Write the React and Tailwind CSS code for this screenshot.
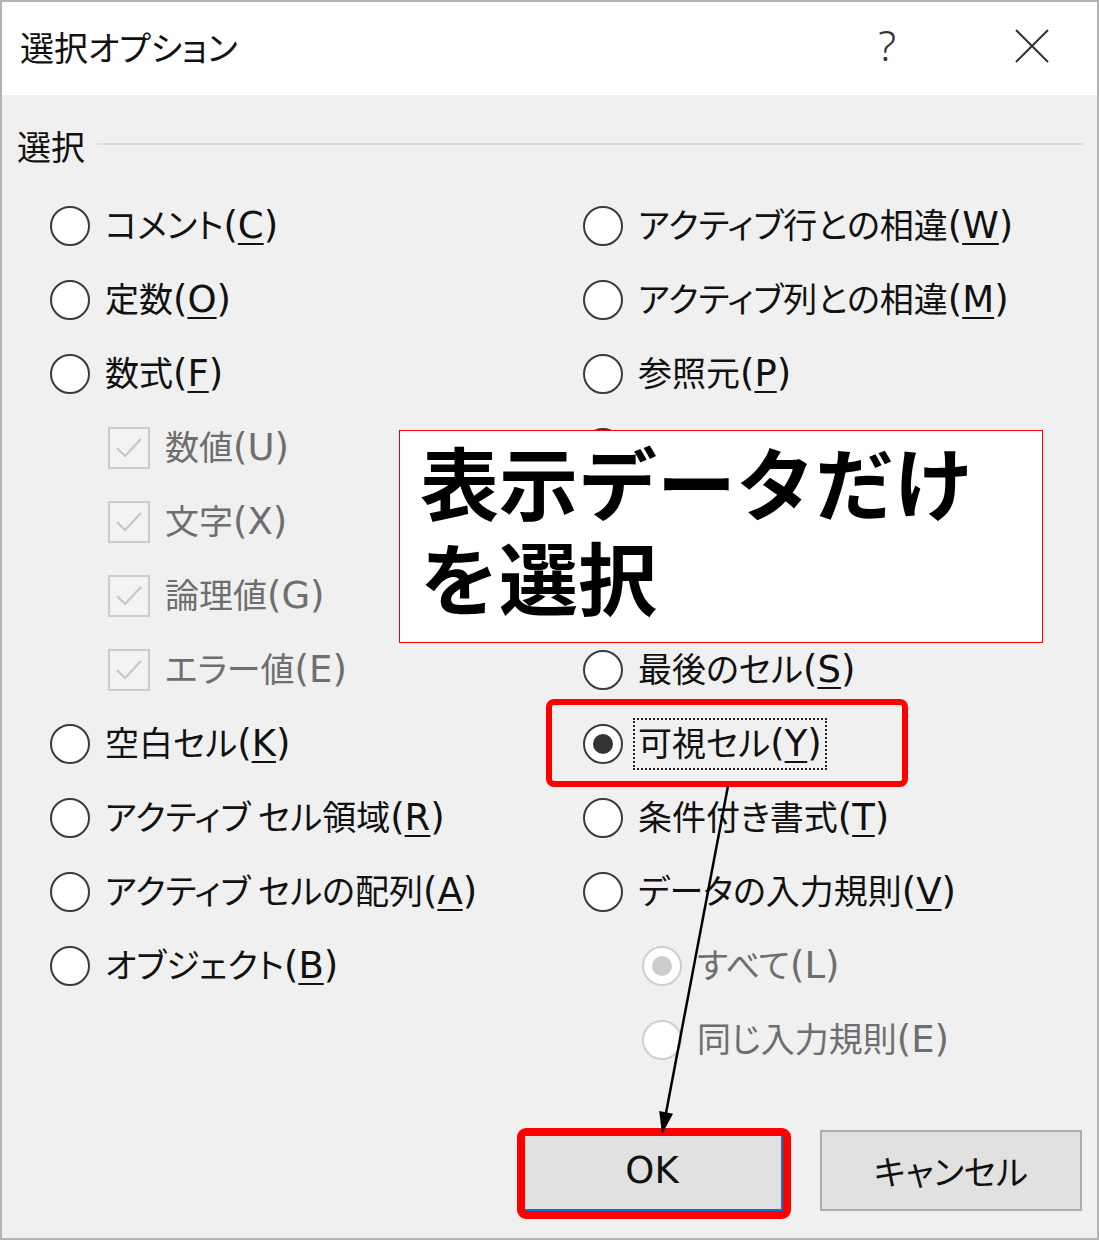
import React from 'react';

const JP = "font-['Noto_Sans_CJK_JP',sans-serif] [font-feature-settings:'palt']";
const LAT = "font-['DejaVu_Sans','Noto_Sans_CJK_JP',sans-serif] text-[37px]";

const LEFT = [
  { type: 'radio', text: 'コメント', key: 'C' },
  { type: 'radio', text: '定数', key: 'O' },
  { type: 'radio', text: '数式', key: 'F' },
  { type: 'check', text: '数値', key: 'U', disabled: true },
  { type: 'check', text: '文字', key: 'X', disabled: true },
  { type: 'check', text: '論理値', key: 'G', disabled: true },
  { type: 'check', text: 'エラー値', key: 'E', disabled: true },
  { type: 'radio', text: '空白セル', key: 'K' },
  { type: 'radio', text: 'アクティブ セル領域', key: 'R' },
  { type: 'radio', text: 'アクティブ セルの配列', key: 'A' },
  { type: 'radio', text: 'オブジェクト', key: 'B' },
  null,
];

// rows 3-5 on the right sit under the callout, their labels are covered
const RIGHT = [
  { type: 'radio', text: 'アクティブ行との相違', key: 'W' },
  { type: 'radio', text: 'アクティブ列との相違', key: 'M' },
  { type: 'radio', text: '参照元', key: 'P' },
  { type: 'radio', text: '参照先', key: 'D', hidden: true },
  { type: 'radio', text: '直接参照のみ', key: 'I', sub: true, hidden: true },
  { type: 'radio', text: 'すべてのレベル', key: 'L', sub: true, hidden: true },
  { type: 'radio', text: '最後のセル', key: 'S' },
  { type: 'radio', text: '可視セル', key: 'Y', checked: true, focus: true },
  { type: 'radio', text: '条件付き書式', key: 'T' },
  { type: 'radio', text: 'データの入力規則', key: 'V' },
  { type: 'radio', text: 'すべて', key: 'L', sub: true, disabled: true, checked: true },
  { type: 'radio', text: '同じ入力規則', key: 'E', sub: true, disabled: true },
];

const Radio = ({ checked, disabled }) => (
  <div className={`w-[40px] h-[40px] shrink-0 rounded-full bg-white flex items-center justify-center border-[2.5px] ${disabled ? 'border-[#cfcfcf]' : 'border-[#3a3a3a]'}`}>
    {checked && <div className={`w-[20px] h-[20px] rounded-full ${disabled ? 'bg-[#cdcdcd]' : 'bg-[#333333]'}`} />}
  </div>
);

const Check = () => (
  <div className="w-[42px] h-[42px] shrink-0 border-2 border-[#cccccc] bg-[#f3f3f3]">
    <svg width="38" height="38" viewBox="0 0 38 38">
      <path d="M7 19 L15 27 L31 10" fill="none" stroke="#c6c6c6" strokeWidth="2.2" />
    </svg>
  </div>
);

const Label = ({ item }) => (
  <span className={`whitespace-nowrap ${item.disabled ? 'text-[#6e6e6e]' : 'text-[#111111]'}`}>
    <span className={`${JP} text-[34px]`}>{item.text}</span>
    <span className={LAT}>
      (<span className={item.disabled ? '' : 'underline decoration-2 underline-offset-[5px]'}>{item.key}</span>)
    </span>
  </span>
);

const Option = ({ item }) => {
  if (!item) return <div className="h-[74px]" />;
  return (
    <div className={`h-[74px] flex items-center pt-[4px] ${item.type === 'check' ? 'pl-[58px]' : item.sub ? 'pl-[59px]' : ''}`}>
      {item.type === 'check' ? <Check /> : <Radio checked={item.checked} disabled={item.disabled} />}
      {item.focus ? (
        <div className="ml-[10px] h-[52px] px-[3px] flex items-center border-2 border-dotted border-[#222222]">
          <Label item={item} />
        </div>
      ) : (
        <div className={`ml-[15px] flex items-center ${item.hidden ? 'invisible' : ''}`}>
          <Label item={item} />
        </div>
      )}
    </div>
  );
};

const App = () => {
  return (
    <div className="relative w-[1099px] h-[1240px] overflow-hidden">
      <div className="w-full h-full border-2 border-[#b3b3b3] bg-[#f0f0f0] flex flex-col">
        {/* title bar */}
        <div className="h-[93px] bg-white flex items-center pl-[18px] pr-[47px]">
          <span className={`${JP} text-[34px] text-[#111111] -mt-[4px]`}>選択オプション</span>
          <div className="flex-1" />
          <span className="font-['Noto_Sans',sans-serif] font-light text-[42px] text-[#333333] -mt-[8px]">?</span>
          <svg width="36" height="36" viewBox="0 0 36 36" className="ml-[118px] -mt-[6px]">
            <path d="M2 2 L34 34 M34 2 L2 34" stroke="#333333" strokeWidth="2" />
          </svg>
        </div>

        {/* body */}
        <div className="flex-1 flex flex-col">
          <div className="mt-[30px] h-[40px] flex items-center pl-[15px] pr-[14px]">
            <span className={`${JP} text-[34px] text-[#111111]`}>選択</span>
            <div className="flex-1 h-[2px] bg-[#dcdcdc] ml-[12px] -mt-[2px]" />
          </div>

          <div className="mt-[22px] pl-[48px] grid grid-cols-[533px_1fr]">
            <div className="flex flex-col">
              {LEFT.map((it, i) => <Option key={i} item={it} />)}
            </div>
            <div className="flex flex-col">
              {RIGHT.map((it, i) => <Option key={i} item={it} />)}
            </div>
          </div>

          <div className="mt-[55px] flex justify-end gap-[37px] pr-[15px]">
            <button className="w-[262px] h-[81px] bg-[#e1e1e1] border-2 border-[#0078d7] flex items-center justify-center">
              <span className="font-['DejaVu_Sans',sans-serif] text-[37px] text-[#111111]">OK</span>
            </button>
            <button className="w-[262px] h-[81px] bg-[#e1e1e1] border-2 border-[#adadad] flex items-center justify-center">
              <span className={`${JP} text-[34px] text-[#111111]`}>キャンセル</span>
            </button>
          </div>
        </div>
      </div>

      {/* annotations */}
      <div className="absolute left-[399px] top-[430px] w-[644px] h-[213px] bg-white border border-[#ff0000] pl-[20px] pt-[2px]">
        <p className="font-['Noto_Sans_CJK_JP',sans-serif] font-bold text-[79px] leading-[95px] text-black whitespace-nowrap">
          表示データだけ
          <br />
          を選択
        </p>
      </div>

      <div className="absolute left-[546px] top-[699px] w-[362px] h-[88px] border-[6px] border-[#ff0000] rounded-[8px]" />
      <div className="absolute left-[517px] top-[1128px] w-[274px] h-[91px] border-[8px] border-[#ff0000] rounded-[9px]" />

      <svg className="absolute inset-0 pointer-events-none" width="1099" height="1240" viewBox="0 0 1099 1240">
        <line x1="728" y1="786" x2="666" y2="1113" stroke="#000000" strokeWidth="2.5" />
        <polygon points="662,1134 673,1113.7 659.2,1111" fill="#000000" />
      </svg>
    </div>
  );
};

export default App;
